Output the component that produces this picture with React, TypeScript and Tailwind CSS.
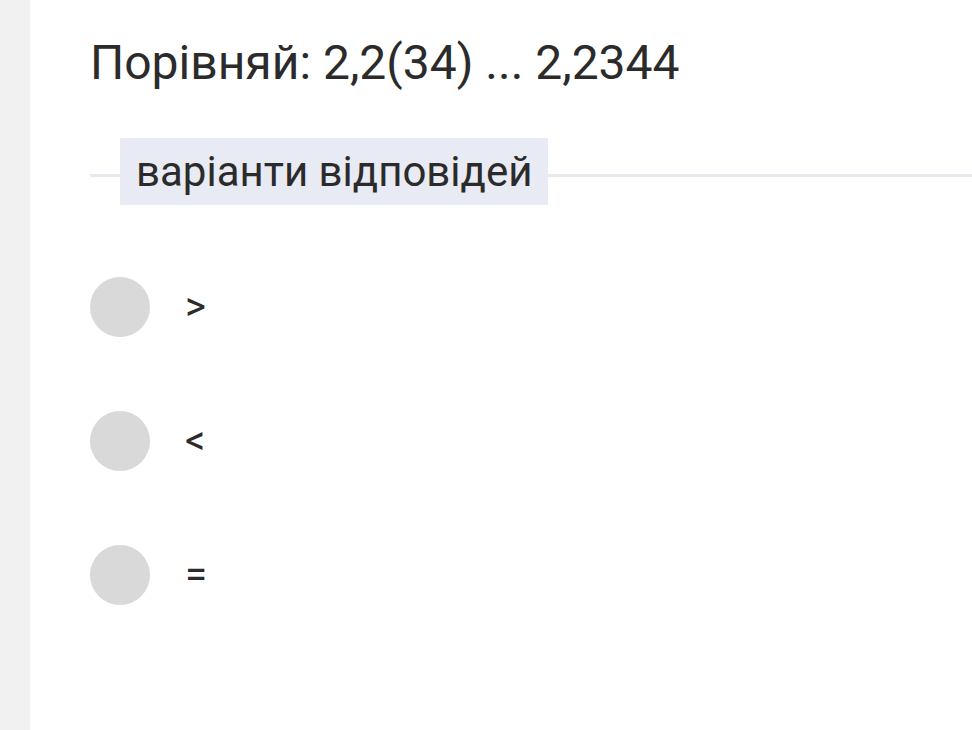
export default function App() {
  const options = [">", "<", "="];
  return (
    <div className="flex min-h-[730px] w-[972px] bg-white" style={{ fontFamily: "Roboto, 'Noto Sans', sans-serif" }}>
      <div className="w-[30px] shrink-0 bg-[#f1f1f1]" />
      <div className="flex flex-1 flex-col pl-[60px]">
        <h1 className="mt-[33px] text-[48px] leading-[60px] text-[#2b2b2b]">Порівняй: 2,2(34) ... 2,2344</h1>
        <div className="relative mt-[45px] flex items-center">
          <div className="absolute left-0 right-0 top-[36px] h-[3px] bg-[#e8e8ef]" />
          <div className="relative ml-[30px] bg-[#e8eaf4] px-[16px] py-[10px] text-[42px] leading-[47px] text-[#2b2b2b]">
            варіанти відповідей
          </div>
        </div>
        <div className="mt-[72px] flex flex-col gap-[74px]">
          {options.map((o) => (
            <div key={o} className="flex items-center gap-[35px]">
              <div className="h-[60px] w-[60px] rounded-full bg-[#d9d9d9]" />
              <span className="text-[40px] leading-[40px] text-[#2b2b2b]">{o}</span>
            </div>
          ))}
        </div>
      </div>
    </div>
  );
}
